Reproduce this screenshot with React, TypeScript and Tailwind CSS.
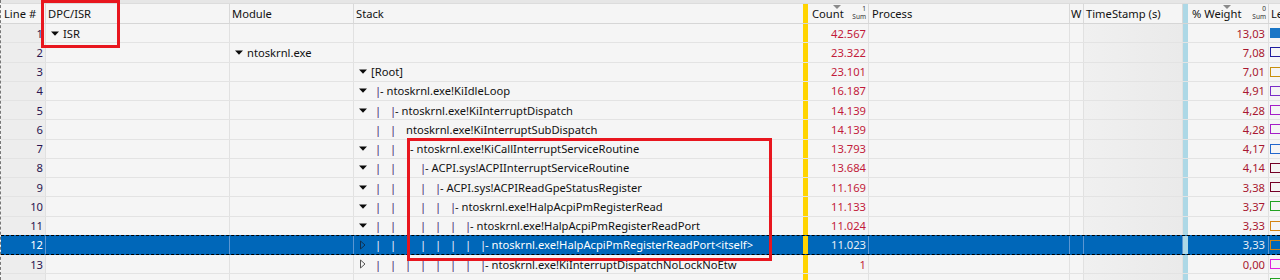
import React from "react";

type StackSpec = {
  tri?: "down" | "right";
  root?: boolean;
  bars?: number;
  dash?: boolean;
  text?: string;
};

type RowSpec = {
  n: number;
  dpc?: string;
  module?: string;
  stack?: StackSpec;
  count: string;
  weight: string;
  color: string;
  filled?: boolean;
  selected?: boolean;
};

const rows: RowSpec[] = [
  { n: 1, dpc: "ISR", count: "42.567", weight: "13,03", color: "#1a76c6", filled: true },
  { n: 2, module: "ntoskrnl.exe", count: "23.322", weight: "7,08", color: "#1e1ea0" },
  { n: 3, stack: { tri: "down", root: true, text: "[Root]" }, count: "23.101", weight: "7,01", color: "#c8900c" },
  { n: 4, stack: { tri: "down", bars: 0, dash: true, text: "ntoskrnl.exe!KiIdleLoop" }, count: "16.187", weight: "4,91", color: "#7a2ec8" },
  { n: 5, stack: { tri: "down", bars: 1, dash: true, text: "ntoskrnl.exe!KiInterruptDispatch" }, count: "14.139", weight: "4,28", color: "#a41ec8" },
  { n: 6, stack: { bars: 2, dash: false, text: "ntoskrnl.exe!KiInterruptSubDispatch" }, count: "14.139", weight: "4,28", color: "#a41ec8" },
  { n: 7, stack: { tri: "down", bars: 2, dash: true, text: "ntoskrnl.exe!KiCallInterruptServiceRoutine" }, count: "13.793", weight: "4,17", color: "#2266cc" },
  { n: 8, stack: { tri: "down", bars: 3, dash: true, text: "ACPI.sys!ACPIInterruptServiceRoutine" }, count: "13.684", weight: "4,14", color: "#740026" },
  { n: 9, stack: { tri: "down", bars: 4, dash: true, text: "ACPI.sys!ACPIReadGpeStatusRegister" }, count: "11.169", weight: "3,38", color: "#740026" },
  { n: 10, stack: { tri: "down", bars: 5, dash: true, text: "ntoskrnl.exe!HalpAcpiPmRegisterRead" }, count: "11.133", weight: "3,37", color: "#22a222" },
  { n: 11, stack: { tri: "down", bars: 6, dash: true, text: "ntoskrnl.exe!HalpAcpiPmRegisterReadPort" }, count: "11.024", weight: "3,33", color: "#d48412" },
  { n: 12, stack: { tri: "right", bars: 7, dash: true, text: "ntoskrnl.exe!HalpAcpiPmRegisterReadPort<itself>" }, count: "11.023", weight: "3,33", color: "#d48412", selected: true },
  { n: 13, stack: { tri: "right", bars: 7, dash: true, text: "ntoskrnl.exe!KiInterruptDispatchNoLockNoEtw" }, count: "1", weight: "0,00", color: "#e020e0" },
];

function DownTri() {
  return (
    <svg width="8" height="5" viewBox="0 0 8 5" className="block shrink-0">
      <path d="M0 0.5 H8 L4 4.8 Z" fill="#0a0a0a" />
    </svg>
  );
}

function RightTri({ selected }: { selected?: boolean }) {
  return (
    <svg width="7" height="10" viewBox="0 0 7 10" className="block shrink-0">
      <path d="M1.5 1 L6 5 L1.5 9 Z" fill="none" stroke={selected ? "#10304f" : "#555555"} strokeWidth="1" />
    </svg>
  );
}

function Bar({ cls }: { cls: string }) {
  return <span className={`w-[4px] shrink-0 flex justify-center ${cls}`}>|</span>;
}

function StackCell({ s, selected }: { s?: StackSpec; selected?: boolean }) {
  if (!s) return null;
  const barColor = selected ? "text-[#f2f0ff]" : "text-[#43186e]";
  const bars = [];
  for (let i = 0; i < (s.bars ?? 0); i++) {
    bars.push(
      <span key={i} className="w-[15px] shrink-0 flex">
        <Bar cls={barColor} />
      </span>
    );
  }
  return (
    <div className="flex items-center pl-[5px] whitespace-nowrap">
      <span className="w-[12px] shrink-0 flex items-center">
        {s.tri === "down" ? <DownTri /> : s.tri === "right" ? <RightTri selected={selected} /> : null}
      </span>
      {s.root ? (
        <span>{s.text}</span>
      ) : (
        <>
          <span className="w-[5px] shrink-0" />
          {bars}
          {s.dash ? (
            <>
              <Bar cls={barColor} />
              <span className="whitespace-pre">{"- "}</span>
            </>
          ) : null}
          <span>{s.text}</span>
        </>
      )}
    </div>
  );
}

function Row({ r }: { r: RowSpec }) {
  const sel = !!r.selected;
  const sep = sel ? "border-r border-[#5b96d2]" : "border-r border-[#e1e1e1]";
  const rowCls = sel
    ? "-mt-px h-[20.25px] bg-[#0067b9] text-white border-y border-dashed border-black"
    : "h-[19.25px] border-b border-[#e3e3e3] text-[#111111]";
  return (
    <div className={`flex items-stretch ${rowCls}`}>
      <div className={`w-[45px] shrink-0 flex items-center justify-end pr-[2px] ${sep} ${sel ? "" : "bg-[#ededed] text-[#2a1450]"}`}>
        {r.n}
      </div>
      <div className={`w-[184px] shrink-0 flex items-center pl-[5px] gap-[4px] ${sep}`}>
        {r.dpc ? (
          <>
            <DownTri />
            <span>{r.dpc}</span>
          </>
        ) : null}
      </div>
      <div className={`w-[124px] shrink-0 flex items-center pl-[5px] gap-[4px] ${sep}`}>
        {r.module ? (
          <>
            <DownTri />
            <span>{r.module}</span>
          </>
        ) : null}
      </div>
      <div className="w-[449px] shrink-0 flex items-center overflow-hidden">
        <StackCell s={r.stack} selected={sel} />
      </div>
      <div className="w-[5px] shrink-0 bg-[#ffd400]" />
      <div className={`w-[61px] shrink-0 flex items-center justify-end pr-[2px] ${sep} ${sel ? "text-[#e8eef6]" : "text-[#c21a3a]"}`}>
        {r.count}
      </div>
      <div className={`w-[201px] shrink-0 ${sep}`} />
      <div className={`w-[14px] shrink-0 ${sep}`} />
      <div className={`w-[99px] shrink-0 ${sep} ${sel ? "" : "bg-gradient-to-r from-[#f0f0f0] to-[#eaeaea]"}`} />
      <div className="w-[5px] shrink-0 bg-[#add8e6]" />
      <div className={`w-[81px] shrink-0 flex items-center justify-end pr-[3px] ${sep} ${sel ? "text-[#e8eef6]" : "text-[#a8172f]"}`}>
        {r.weight}
      </div>
      <div className="flex-1 flex items-center pl-[1px]">
        <div
          className="w-[12px] h-[10px] border shrink-0"
          style={{ borderColor: r.color, backgroundColor: r.filled ? r.color : "transparent" }}
        />
      </div>
    </div>
  );
}

function HeaderCell({ w, children, cls = "" }: { w: string; children?: React.ReactNode; cls?: string }) {
  return <div className={`${w} shrink-0 flex items-center border-r border-[#d9d9d9] relative whitespace-nowrap ${cls}`}>{children}</div>;
}

function SortMark({ left, num }: { left: string; num: string }) {
  return (
    <>
      <svg width="8" height="4" viewBox="0 0 8 4" className={`absolute top-[1px] ${left}`}>
        <path d="M0 0 H8 L4 4 Z" fill="#8a8a8a" />
      </svg>
      <div className="ml-auto mr-[2px] flex flex-col items-end leading-none self-stretch justify-between pt-[2px] pb-[3px]">
        <span className="text-[6.5px] text-[#333]">{num}</span>
        <span className="text-[6.5px] text-[#333]">Sum</span>
      </div>
    </>
  );
}

export default function App() {
  return (
    <div className="w-[1280px] h-[280px] overflow-hidden relative bg-[#f5f5f5] font-['Noto_Sans',sans-serif] text-[11.2px] leading-none border-l border-dashed border-[#777]">
      <div className="h-[4px] bg-[#e6e6e6] border-b border-[#dcdcdc]" />
      <div className="flex h-[20px] bg-[#f5f5f5] border-b border-[#d6d6d6] text-[#111111] text-[11.2px]">
        <HeaderCell w="w-[45px]" cls="pl-[3px]">Line #</HeaderCell>
        <HeaderCell w="w-[184px]" cls="pl-[2px]">DPC/ISR</HeaderCell>
        <HeaderCell w="w-[124px]" cls="pl-[2px]">Module</HeaderCell>
        <div className="w-[449px] shrink-0 flex items-center pl-[2px]">Stack</div>
        <div className="w-[5px] shrink-0 bg-[#ffd400]" />
        <HeaderCell w="w-[61px]" cls="pl-[4px]">
          <span>Count</span>
          <SortMark left="left-[25px]" num="1" />
        </HeaderCell>
        <HeaderCell w="w-[201px]" cls="pl-[3px]">Process</HeaderCell>
        <HeaderCell w="w-[14px]" cls="pl-[1px]">W</HeaderCell>
        <HeaderCell w="w-[99px]" cls="pl-[2px]">TimeStamp (s)</HeaderCell>
        <div className="w-[5px] shrink-0 bg-[#add8e6]" />
        <HeaderCell w="w-[81px]" cls="pl-[4px]">
          <span>% Weight</span>
          <SortMark left="left-[35px]" num="0" />
        </HeaderCell>
        <div className="flex-1 flex items-center pl-[2px] overflow-hidden whitespace-nowrap">Le</div>
      </div>
      {rows.map((r) => (
        <Row key={r.n} r={r} />
      ))}
      <div className="flex h-[19.25px]">
        <div className="w-[45px] shrink-0 bg-[#ededed] border-r border-[#e1e1e1]" />
        <div className="w-[184px] shrink-0 border-r border-[#e1e1e1]" />
        <div className="w-[124px] shrink-0 border-r border-[#e1e1e1]" />
        <div className="w-[449px] shrink-0" />
        <div className="w-[5px] shrink-0 bg-[#ffd400]" />
        <div className="w-[61px] shrink-0 border-r border-[#e1e1e1]" />
        <div className="w-[201px] shrink-0 border-r border-[#e1e1e1]" />
        <div className="w-[14px] shrink-0 border-r border-[#e1e1e1]" />
        <div className="w-[99px] shrink-0 border-r border-[#e1e1e1] bg-gradient-to-r from-[#f0f0f0] to-[#eaeaea]" />
        <div className="w-[5px] shrink-0 bg-[#add8e6]" />
        <div className="w-[81px] shrink-0 border-r border-[#e1e1e1]" />
        <div className="flex-1 flex items-start pt-[4px] pl-[1px]">
          <div className="w-[12px] h-[10px] border border-[#22a222]" />
        </div>
      </div>
      <div className="absolute left-[40px] top-0 w-[79px] h-[48px] border-[3px] border-[#e8161e] pointer-events-none" />
      <div className="absolute left-[406px] top-[138px] w-[365px] h-[123px] border-[3px] border-[#e8161e] pointer-events-none" />
    </div>
  );
}
